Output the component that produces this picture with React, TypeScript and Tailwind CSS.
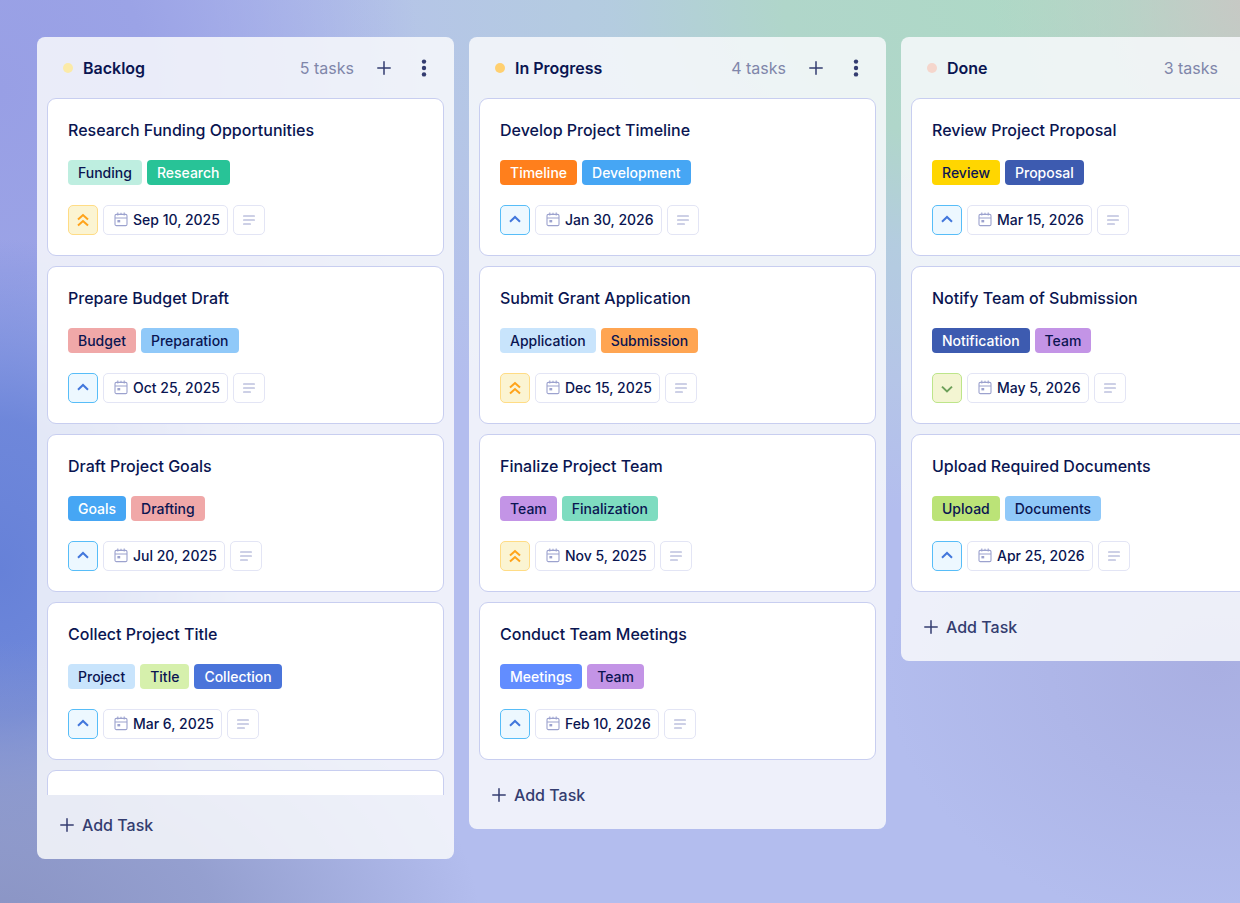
import clsx from "clsx";

type Priority = "high" | "medium" | "low";

interface Tag {
  label: string;
  color: string;
}

interface Task {
  title: string;
  tags: Tag[];
  priority: Priority;
  date: string;
}

interface ColumnData {
  name: string;
  dot: string;
  count: number;
  tasks: Task[];
}

const NAVY = "text-[#0a1551]";

const COLUMNS: ColumnData[] = [
  {
    name: "Backlog",
    dot: "bg-[#fbeaa8]",
    count: 5,
    tasks: [
      {
        title: "Research Funding Opportunities",
        tags: [
          { label: "Funding", color: "bg-[#beeee0] text-[#0a1551]" },
          { label: "Research", color: "bg-[#28c397] text-white" },
        ],
        priority: "high",
        date: "Sep 10, 2025",
      },
      {
        title: "Prepare Budget Draft",
        tags: [
          { label: "Budget", color: "bg-[#f0a8a8] text-[#0a1551]" },
          { label: "Preparation", color: "bg-[#90c9f9] text-[#0a1551]" },
        ],
        priority: "medium",
        date: "Oct 25, 2025",
      },
      {
        title: "Draft Project Goals",
        tags: [
          { label: "Goals", color: "bg-[#46a6f4] text-white" },
          { label: "Drafting", color: "bg-[#f0a8a8] text-[#0a1551]" },
        ],
        priority: "medium",
        date: "Jul 20, 2025",
      },
      {
        title: "Collect Project Title",
        tags: [
          { label: "Project", color: "bg-[#c8e4fc] text-[#0a1551]" },
          { label: "Title", color: "bg-[#d6f0ac] text-[#0a1551]" },
          { label: "Collection", color: "bg-[#4a74da] text-white" },
        ],
        priority: "medium",
        date: "Mar 6, 2025",
      },
    ],
  },
  {
    name: "In Progress",
    dot: "bg-[#ffd070]",
    count: 4,
    tasks: [
      {
        title: "Develop Project Timeline",
        tags: [
          { label: "Timeline", color: "bg-[#ff7f1c] text-white" },
          { label: "Development", color: "bg-[#46a6f4] text-white" },
        ],
        priority: "medium",
        date: "Jan 30, 2026",
      },
      {
        title: "Submit Grant Application",
        tags: [
          { label: "Application", color: "bg-[#c8e4fc] text-[#0a1551]" },
          { label: "Submission", color: "bg-[#ffa552] text-[#0a1551]" },
        ],
        priority: "high",
        date: "Dec 15, 2025",
      },
      {
        title: "Finalize Project Team",
        tags: [
          { label: "Team", color: "bg-[#c394e6] text-[#0a1551]" },
          { label: "Finalization", color: "bg-[#7edcc0] text-[#0a1551]" },
        ],
        priority: "high",
        date: "Nov 5, 2025",
      },
      {
        title: "Conduct Team Meetings",
        tags: [
          { label: "Meetings", color: "bg-[#628dff] text-white" },
          { label: "Team", color: "bg-[#c394e6] text-[#0a1551]" },
        ],
        priority: "medium",
        date: "Feb 10, 2026",
      },
    ],
  },
  {
    name: "Done",
    dot: "bg-[#f5d6cc]",
    count: 3,
    tasks: [
      {
        title: "Review Project Proposal",
        tags: [
          { label: "Review", color: "bg-[#ffd600] text-[#0a1551]" },
          { label: "Proposal", color: "bg-[#3d5bb0] text-white" },
        ],
        priority: "medium",
        date: "Mar 15, 2026",
      },
      {
        title: "Notify Team of Submission",
        tags: [
          { label: "Notification", color: "bg-[#3d5bb0] text-white" },
          { label: "Team", color: "bg-[#c394e6] text-[#0a1551]" },
        ],
        priority: "low",
        date: "May 5, 2026",
      },
      {
        title: "Upload Required Documents",
        tags: [
          { label: "Upload", color: "bg-[#bbe377] text-[#0a1551]" },
          { label: "Documents", color: "bg-[#90c9f9] text-[#0a1551]" },
        ],
        priority: "medium",
        date: "Apr 25, 2026",
      },
    ],
  },
];

const PRIORITY_STYLES: Record<Priority, string> = {
  high: "bg-[#fbf4d2] border-[#ffdc85] text-[#ffa31a]",
  medium: "bg-[#edf8ff] border-[#57bdf8] text-[#4277dc]",
  low: "bg-[#f3f5d2] border-[#bde58a] text-[#6da05a]",
};

const PRIORITY_PATHS: Record<Priority, string> = {
  high: "M2 6.5 7 2l5 4.5M2 12.5 7 8l5 4.5",
  medium: "M2 8.8 7 4l5 4.8",
  low: "M2 5.6 7 10.4l5-4.8",
};

function PlusIcon() {
  return (
    <svg width="14" height="14" viewBox="0 0 14 14" fill="none" stroke="currentColor" strokeWidth="1.5" strokeLinecap="round" aria-hidden="true">
      <path d="M7 .8v12.4M.8 7h12.4" />
    </svg>
  );
}

function DotsIcon() {
  return (
    <svg width="6" height="18" viewBox="0 0 6 18" fill="currentColor" aria-hidden="true">
      <circle cx="3" cy="2.6" r="2.2" />
      <circle cx="3" cy="9" r="2.2" />
      <circle cx="3" cy="15.4" r="2.2" />
    </svg>
  );
}

function CalendarIcon() {
  return (
    <svg width="14" height="16" viewBox="0 0 14 16" fill="none" stroke="#9ca2ce" aria-hidden="true">
      <rect x="1" y="2.4" width="12" height="11.2" rx="1.4" strokeWidth="1.1" />
      <path d="M1 6h12M3.8.4v3.2M7 .8v2.2M10.2.4v3.2" strokeWidth="1.1" />
      <rect x="3.4" y="8" width="2.8" height="2.4" fill="#9ca2ce" stroke="none" />
    </svg>
  );
}

function NotesIcon() {
  return (
    <svg width="12" height="10" viewBox="0 0 12 10" fill="none" stroke="#9ca2ce" strokeWidth="1.2" strokeLinecap="round" aria-hidden="true">
      <path d="M.6 1h10.8M.6 5h10.8M.6 9h6.8" />
    </svg>
  );
}

function TaskCard({ task }: { task: Task }) {
  return (
    <article className="shrink-0 rounded-[9px] border border-[#c8cef0] bg-white px-5 py-[19px]">
      <h3 className={clsx("text-base leading-6 font-medium", NAVY)}>{task.title}</h3>

      <div className="mt-[18px] flex gap-[5px]">
        {task.tags.map((tag) => (
          <span key={tag.label} className={clsx("h-[25px] rounded px-[10px] text-sm leading-[25px] font-medium", tag.color)}>
            {tag.label}
          </span>
        ))}
      </div>

      <div className="mt-5 flex gap-[5px] pb-px">
        <button
          type="button"
          aria-label={`Priority: ${task.priority}`}
          className={clsx("flex size-[30px] items-center justify-center rounded-[5px] border", PRIORITY_STYLES[task.priority])}
        >
          <svg width="14" height="14" viewBox="0 0 14 14" fill="none" stroke="currentColor" strokeWidth="2" aria-hidden="true">
            <path d={PRIORITY_PATHS[task.priority]} />
          </svg>
        </button>
        <button
          type="button"
          className={clsx("flex h-[30px] items-center gap-[5px] rounded-[5px] border border-[#e3e5f5] pr-[7px] pl-[10px] text-sm font-medium", NAVY)}
        >
          <CalendarIcon />
          {task.date}
        </button>
        <button
          type="button"
          aria-label="Description"
          className="flex h-[30px] w-8 items-center justify-center rounded-[5px] border border-[#e3e5f5]"
        >
          <NotesIcon />
        </button>
      </div>
    </article>
  );
}

function Column({ column }: { column: ColumnData }) {
  return (
    <section className="flex max-h-full w-[417px] shrink-0 flex-col rounded-lg bg-[#f8f9fc]/85">
      {/* Header */}
      <header className="flex h-[61px] shrink-0 items-center pr-[10px] pl-[26px]">
        <span className={clsx("mr-[10px] size-[10px] rounded-full", column.dot)} />
        <h2 className={clsx("text-base font-semibold", NAVY)}>{column.name}</h2>
        <span className="mr-[10px] ml-auto text-base text-[#8086aa]">{column.count} tasks</span>
        <button type="button" aria-label="Add task" className="flex h-10 w-10 items-center justify-center text-[#333c70]">
          <PlusIcon />
        </button>
        <button type="button" aria-label="Column menu" className="flex h-10 w-10 items-center justify-center text-[#333c70]">
          <DotsIcon />
        </button>
      </header>

      {/* Cards */}
      <div className="flex min-h-0 flex-col gap-[10px] overflow-y-auto px-[10px] pb-[5px] [scrollbar-width:none]">
        {column.tasks.map((task) => (
          <TaskCard key={task.title} task={task} />
        ))}
        {column.count > column.tasks.length && (
          <div className="h-[158px] shrink-0 rounded-[9px] border border-[#c8cef0] bg-white" />
        )}
      </div>

      {/* Footer */}
      <footer className="h-16 shrink-0 px-[23px] pt-[18px]">
        <button type="button" className="flex h-6 items-center gap-2 text-base font-medium text-[#343d70]">
          <PlusIcon />
          Add Task
        </button>
      </footer>
    </section>
  );
}

export default function App() {
  return (
    <main className="flex h-screen items-start gap-[15px] overflow-x-auto overflow-y-hidden bg-[#b3bdee] bg-[radial-gradient(ellipse_480px_280px_at_0%_102%,#8a94c4_0%,#8d98c8cc_45%,#8a94c400_100%),radial-gradient(ellipse_240px_330px_at_0%_63%,#6681d8_0%,#6681d8dd_45%,#6681d800_100%),radial-gradient(ellipse_420px_520px_at_0%_10%,#989fe5_0%,#9ba3e6_35%,#a0a8e600_100%),radial-gradient(ellipse_260px_280px_at_101%_0%,#c8c8c4_0%,#c0cec688_50%,#c0cec600_100%),radial-gradient(ellipse_860px_520px_at_84%_0%,#aed9c6_0%,#b0d6ca_30%,#b4d0dccc_50%,#b6c9e4aa_75%,#b4c2ea00_100%),radial-gradient(ellipse_330px_260px_at_98%_74%,#a9afe2_0%,#a9afe200_100%)] pt-[37px] pr-[37px] pb-11 pl-[37px] font-['Inter',sans-serif] [scrollbar-width:none]">
      {COLUMNS.map((column) => (
        <Column key={column.name} column={column} />
      ))}
    </main>
  );
}
